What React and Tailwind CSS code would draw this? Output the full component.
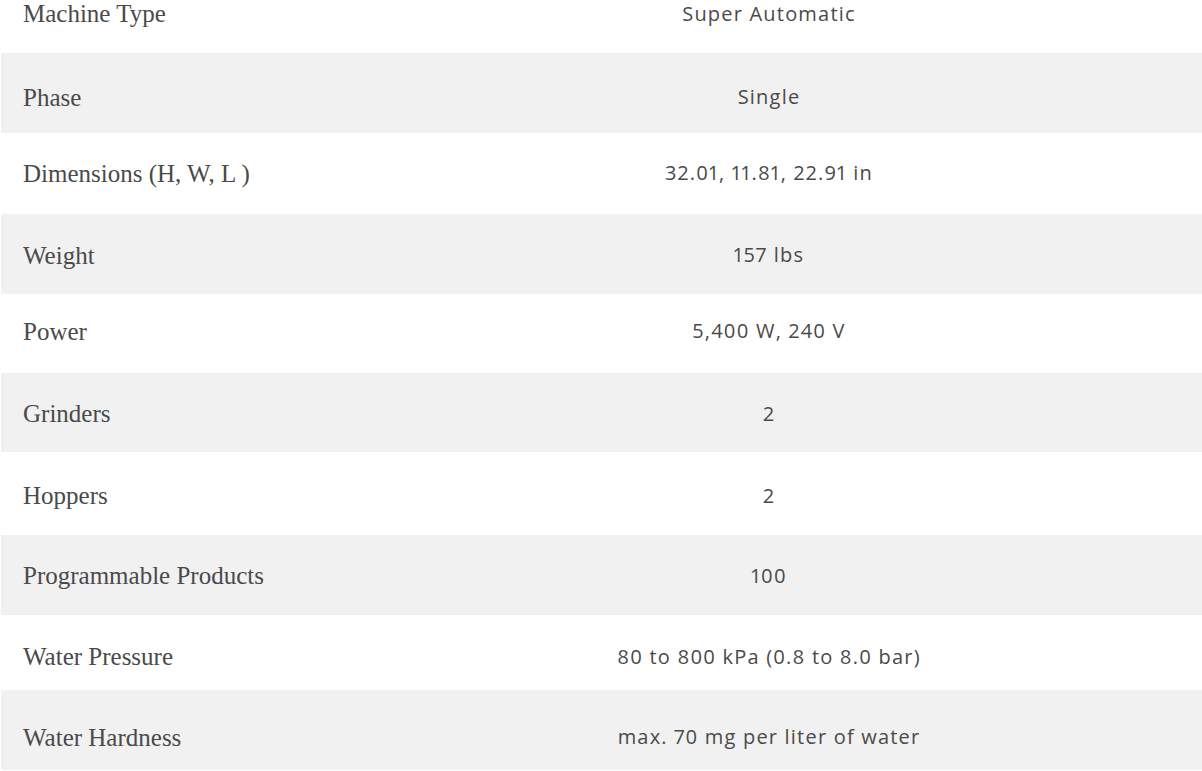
import React from "react";

// per-row heights / nudges follow the reference spacing
const specs = [
  { label: "Machine Type", value: "Super Automatic", h: "h-[53px]", pad: "pb-[26px]" },
  { label: "Phase", value: "Single", h: "h-[80px]", pad: "pt-[8px]" },
  { label: "Dimensions (H, W, L )", value: "32.01, 11.81, 22.91 in", h: "h-[81px]", pad: "pb-[1px]" },
  { label: "Weight", value: "157 lbs", h: "h-[80px]", pad: "pt-[2px]" },
  { label: "Power", value: "5,400 W, 240 V", h: "h-[79px]", pad: "pb-[5px]" },
  { label: "Grinders", value: "2", h: "h-[79px]", pad: "pt-[2px]" },
  { label: "Hoppers", value: "2", h: "h-[83px]", pad: "pt-[4px]" },
  { label: "Programmable Products", value: "100", h: "h-[80px]", pad: "pt-[1px]" },
  { label: "Water Pressure", value: "80 to 800 kPa (0.8 to 8.0 bar)", h: "h-[75px]", pad: "pt-[8px]" },
  { label: "Water Hardness", value: "max. 70 mg per liter of water", h: "h-[80px]", pad: "pt-[14px]" },
];

const App = () => {
  return (
    <div className="w-[1202px] h-[771px] bg-white overflow-hidden text-[#4a4a4a]">
      {specs.map((row, i) => {
        const striped = i % 2 === 1;
        return (
          <div
            key={row.label}
            className={`flex items-center ${row.h} ${row.pad} ${
              striped ? "bg-[#f1f1f1] ml-px" : "bg-white"
            }`}
          >
            {/* Label */}
            <div
              className={`${striped ? "w-[335px] pl-[22px]" : "w-[336px] pl-[23px]"} text-[25px] leading-none`}
              style={{ fontFamily: "'Liberation Serif', serif" }}
            >
              {row.label}
            </div>
            {/* Value */}
            <div
              className="flex-1 text-center text-[20px] leading-none tracking-[0.06em] proportional-nums"
              style={{ fontFamily: "'Open Sans', sans-serif" }}
            >
              {row.value}
            </div>
          </div>
        );
      })}
    </div>
  );
};

export default App;
